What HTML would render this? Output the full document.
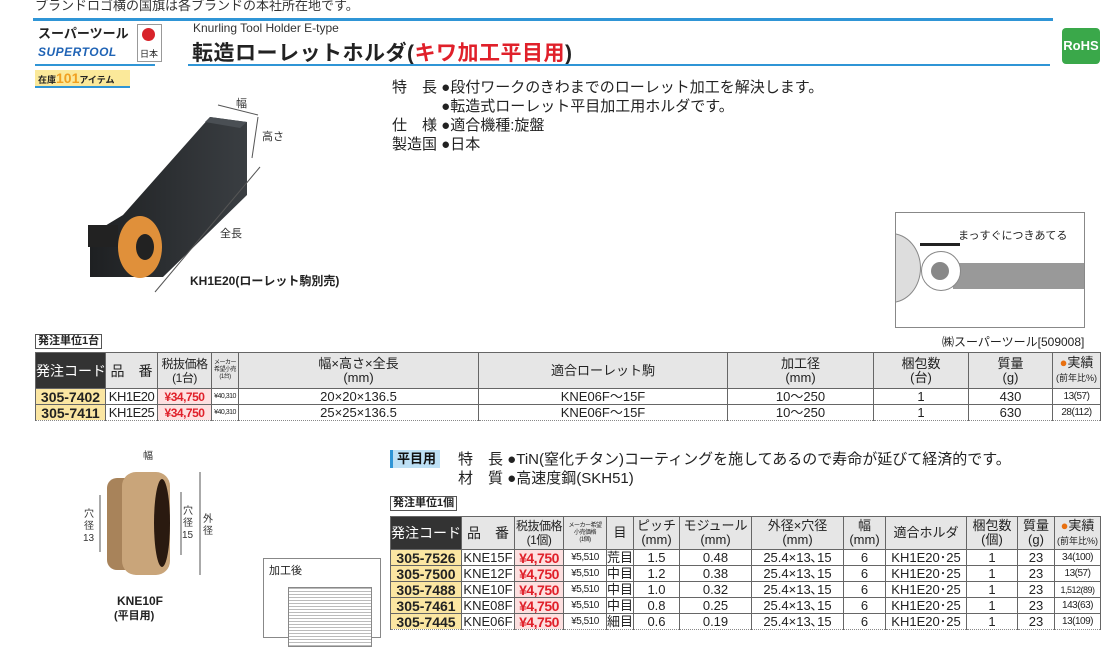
<!DOCTYPE html>
<html><head><meta charset="utf-8">
<style>
*{margin:0;padding:0;box-sizing:border-box}
body{width:1103px;height:633px;overflow:hidden;background:#fff;font-family:"Liberation Sans","Noto Sans CJK JP",sans-serif;color:#222;position:relative}
.a{position:absolute;white-space:nowrap}
table{position:absolute;border-collapse:collapse;table-layout:fixed}
td{border:1px solid #666;text-align:center;font-size:13px;line-height:14px;padding:0;white-space:nowrap;overflow:hidden}
tr.r td{border-bottom:1px dotted #888;height:16px}
.hd td{background:#e6e6e6;font-size:13px;line-height:14px}
.hd td.dk{background:#333;color:#fff;font-size:14px}
.cd{background:#fbe6a2;font-weight:bold;font-size:14px!important;color:#222}
.pr{background:#fde0e0;color:#e0202a;font-weight:bold;font-size:14px!important;letter-spacing:-0.5px}
.sm{font-size:10px!important;letter-spacing:-0.5px}
.tn{font-size:6px!important;line-height:7px!important;letter-spacing:-0.5px}
</style></head><body>
<div class="a" style="left:35px;top:-5px;font-size:13px;color:#333">ブランドロゴ横の国旗は各ブランドの本社所在地です。</div>
<div class="a" style="left:33px;top:18px;width:1020px;height:3px;background:#2f95d6"></div>
<div class="a" style="left:38px;top:23px;font-size:13px;font-weight:bold">スーパーツール</div>
<div class="a" style="left:38px;top:45px;font-size:12px;font-weight:bold;font-style:italic;color:#1f63b5;letter-spacing:0.5px">SUPERTOOL</div>
<div class="a" style="left:35px;top:64px;width:120px;height:2px;background:#2f95d6"></div>
<div class="a" style="left:137px;top:24px;width:25px;height:38px;border:1px solid #999"></div>
<div class="a" style="left:142px;top:28px;width:13px;height:13px;border-radius:50%;background:#d8232a"></div>
<div class="a" style="left:140px;top:47px;font-size:9px">日本</div>
<div class="a" style="left:193px;top:21px;font-size:12px;color:#333">Knurling Tool Holder E-type</div>
<div class="a" style="left:192px;top:37px;font-size:21px;font-weight:bold;letter-spacing:0.5px">転造ローレットホルダ(<span style="color:#e0202a">キワ加工平目用</span>)</div>
<div class="a" style="left:188px;top:64px;width:862px;height:2px;background:#2f95d6"></div>
<div class="a" style="left:1062px;top:28px;width:38px;height:36px;background:#3aa84a;border-radius:4px;color:#fff;font-size:13px;font-weight:bold;text-align:center;line-height:36px">RoHS</div>
<div class="a" style="left:35px;top:70px;width:95px;height:16px;background:#fbe99a;font-size:9px;font-weight:bold;line-height:16px;padding-left:3px">在庫<span style="color:#f0a020;font-size:14px">101</span>アイテム</div>
<div class="a" style="left:35px;top:86px;width:95px;height:2px;background:#2f95d6"></div>

<div class="a" style="left:392px;top:78px;font-size:15px;line-height:19px">特　長 ●段付ワークのきわまでのローレット加工を解決します。<br>　　　 ●転造式ローレット平目加工用ホルダです。<br>仕　様 ●適合機種:旋盤<br>製造国 ●日本</div>

<svg class="a" style="left:0;top:0" width="400" height="633">
<defs><linearGradient id="g" x1="0" y1="0" x2="1" y2="0"><stop offset="0" stop-color="#1e2022"/><stop offset="1" stop-color="#3a3e42"/></linearGradient></defs>
<polygon points="210,117 247,122 247,195 163,277 90,277 90,235 123,215" fill="url(#g)"/>
<polygon points="210,117 247,122 240,128 205,122" fill="#4a4f54"/>
<rect x="88" y="225" width="30" height="22" fill="#222"/>
<ellipse cx="140" cy="247" rx="22" ry="31" fill="#e0903a"/>
<ellipse cx="145" cy="247" rx="9" ry="13" fill="#222"/>
<line x1="218" y1="105" x2="258" y2="115" stroke="#555"/>
<line x1="258" y1="117" x2="252" y2="158" stroke="#555"/>
<line x1="260" y1="167" x2="155" y2="292" stroke="#555"/>
<text x="236" y="107" font-size="11" fill="#333">幅</text>
<text x="262" y="140" font-size="11" fill="#333">高さ</text>
<text x="220" y="237" font-size="11" fill="#333">全長</text>
<text x="190" y="285" font-size="12" font-weight="bold" fill="#222">KH1E20(ローレット駒別売)</text>

<text x="143" y="459" font-size="10" fill="#333">幅</text>
<rect x="107" y="478" width="30" height="92" rx="10" fill="#a8835a"/>
<rect x="122" y="472" width="48" height="103" rx="14" fill="#c9a57a"/>
<ellipse cx="162" cy="523" rx="8" ry="44" fill="#2a1a10"/>
<line x1="100" y1="495" x2="100" y2="552" stroke="#555"/>
<line x1="181" y1="492" x2="181" y2="555" stroke="#555"/>
<line x1="200" y1="472" x2="200" y2="575" stroke="#555"/>
<text x="84" y="517" font-size="10" fill="#333">穴</text><text x="84" y="529" font-size="10" fill="#333">径</text><text x="83" y="541" font-size="10" fill="#333">13</text>
<text x="183" y="514" font-size="10" fill="#333">穴</text><text x="183" y="526" font-size="10" fill="#333">径</text><text x="182" y="538" font-size="10" fill="#333">15</text>
<text x="203" y="522" font-size="10" fill="#333">外</text><text x="203" y="534" font-size="10" fill="#333">径</text>
<text x="117" y="605" font-size="12" font-weight="bold" fill="#222">KNE10F</text>
<text x="114" y="619" font-size="11" font-weight="bold" fill="#222">(平目用)</text>
</svg>
<div class="a" style="left:263px;top:558px;width:118px;height:80px;border:1px solid #888">
<div class="a" style="left:5px;top:3px;font-size:11px">加工後</div>
<div class="a" style="left:24px;top:28px;width:84px;height:60px;background:repeating-linear-gradient(#bbb 0 1px,#fff 1px 3px);border:1px solid #888"></div>
</div>

<div class="a" style="left:895px;top:212px;width:190px;height:116px;border:1px solid #888;overflow:hidden">
<div class="a" style="left:-35px;top:20px;width:60px;height:70px;border-radius:50%;background:#ddd;border:1px solid #888"></div>
<div class="a" style="left:57px;top:50px;width:135px;height:26px;background:#999"></div>
<div class="a" style="left:25px;top:38px;width:40px;height:40px;border-radius:50%;background:#fff;border:1px solid #888"></div>
<div class="a" style="left:35px;top:49px;width:18px;height:18px;border-radius:50%;background:#888"></div>
<div class="a" style="left:24px;top:30px;width:40px;height:3px;background:#222"></div>
<div class="a" style="left:62px;top:14px;font-size:11px">まっすぐにつきあてる</div>
</div>
<div class="a" style="left:942px;top:333px;font-size:12px">㈱スーパーツール[509008]</div>

<div class="a" style="left:35px;top:334px;border:1px solid #555;font-size:11px;font-weight:bold;padding:0 2px;line-height:13px">発注単位1台</div>
<table style="left:35px;top:352px;width:1065px">
<colgroup><col style="width:70px"><col style="width:52px"><col style="width:54px"><col style="width:27px"><col style="width:240px"><col style="width:249px"><col style="width:146px"><col style="width:95px"><col style="width:84px"><col style="width:48px"></colgroup>
<tr class="hd" style="height:36px"><td class="dk">発注コード</td><td style="font-size:14px">品　番</td><td style="font-size:12px;letter-spacing:-0.5px">税抜価格<br>(1台)</td><td class="tn">メーカー<br>希望小売<br>(1台)</td><td>幅×高さ×全長<br>(mm)</td><td>適合ローレット駒</td><td>加工径<br>(mm)</td><td>梱包数<br>(台)</td><td>質量<br>(g)</td><td><span style="color:#e87010">●</span>実績<br><span style="font-size:9px">(前年比%)</span></td></tr>
<tr class="r"><td class="cd">305-7402</td><td style="letter-spacing:-0.5px">KH1E20</td><td class="pr" style="font-size:12px!important">¥34,750</td><td style="font-size:7px;letter-spacing:-0.5px">¥40,310</td><td>20×20×136.5</td><td>KNE06F～15F</td><td>10～250</td><td>1</td><td>430</td><td class="sm">13(57)</td></tr>
<tr class="r"><td class="cd">305-7411</td><td style="letter-spacing:-0.5px">KH1E25</td><td class="pr" style="font-size:12px!important">¥34,750</td><td style="font-size:7px;letter-spacing:-0.5px">¥40,310</td><td>25×25×136.5</td><td>KNE06F～15F</td><td>10～250</td><td>1</td><td>630</td><td class="sm">28(112)</td></tr>
</table>

<div class="a" style="left:390px;top:450px;background:#bde0f5;color:#111;font-size:13px;font-weight:bold;padding:1px 4px;line-height:16px;border-left:3px solid #2f95d6">平目用</div>
<div class="a" style="left:458px;top:450px;font-size:15px;line-height:19px">特　長 ●TiN(窒化チタン)コーティングを施してあるので寿命が延びて経済的です。<br>材　質 ●高速度鋼(SKH51)</div>
<div class="a" style="left:390px;top:496px;border:1px solid #555;font-size:11px;font-weight:bold;padding:0 2px;line-height:13px">発注単位1個</div>
<table style="left:390px;top:516px;width:710px">
<colgroup><col style="width:71px"><col style="width:53px"><col style="width:49px"><col style="width:43px"><col style="width:27px"><col style="width:46px"><col style="width:72px"><col style="width:92px"><col style="width:42px"><col style="width:81px"><col style="width:51px"><col style="width:37px"><col style="width:46px"></colgroup>
<tr class="hd" style="height:33px"><td class="dk">発注コード</td><td style="font-size:14px">品　番</td><td style="font-size:12px;letter-spacing:-0.5px">税抜価格<br>(1個)</td><td class="tn">メーカー希望<br>小売価格<br>(1個)</td><td>目</td><td>ピッチ<br>(mm)</td><td>モジュール<br>(mm)</td><td>外径×穴径<br>(mm)</td><td>幅<br>(mm)</td><td>適合ホルダ</td><td>梱包数<br>(個)</td><td>質量<br>(g)</td><td><span style="color:#e87010">●</span>実績<br><span style="font-size:9px">(前年比%)</span></td></tr>
<tr class="r"><td class="cd">305-7526</td><td>KNE15F</td><td class="pr">¥4,750</td><td class="sm">¥5,510</td><td>荒目</td><td>1.5</td><td>0.48</td><td>25.4×13､15</td><td>6</td><td>KH1E20･25</td><td>1</td><td>23</td><td class="sm">34(100)</td></tr>
<tr class="r"><td class="cd">305-7500</td><td>KNE12F</td><td class="pr">¥4,750</td><td class="sm">¥5,510</td><td>中目</td><td>1.2</td><td>0.38</td><td>25.4×13､15</td><td>6</td><td>KH1E20･25</td><td>1</td><td>23</td><td class="sm">13(57)</td></tr>
<tr class="r"><td class="cd">305-7488</td><td>KNE10F</td><td class="pr">¥4,750</td><td class="sm">¥5,510</td><td>中目</td><td>1.0</td><td>0.32</td><td>25.4×13､15</td><td>6</td><td>KH1E20･25</td><td>1</td><td>23</td><td class="sm" style="font-size:9px!important">1,512(89)</td></tr>
<tr class="r"><td class="cd">305-7461</td><td>KNE08F</td><td class="pr">¥4,750</td><td class="sm">¥5,510</td><td>中目</td><td>0.8</td><td>0.25</td><td>25.4×13､15</td><td>6</td><td>KH1E20･25</td><td>1</td><td>23</td><td class="sm">143(63)</td></tr>
<tr class="r"><td class="cd">305-7445</td><td>KNE06F</td><td class="pr">¥4,750</td><td class="sm">¥5,510</td><td>細目</td><td>0.6</td><td>0.19</td><td>25.4×13､15</td><td>6</td><td>KH1E20･25</td><td>1</td><td>23</td><td class="sm">13(109)</td></tr>
</table>
</body></html>
